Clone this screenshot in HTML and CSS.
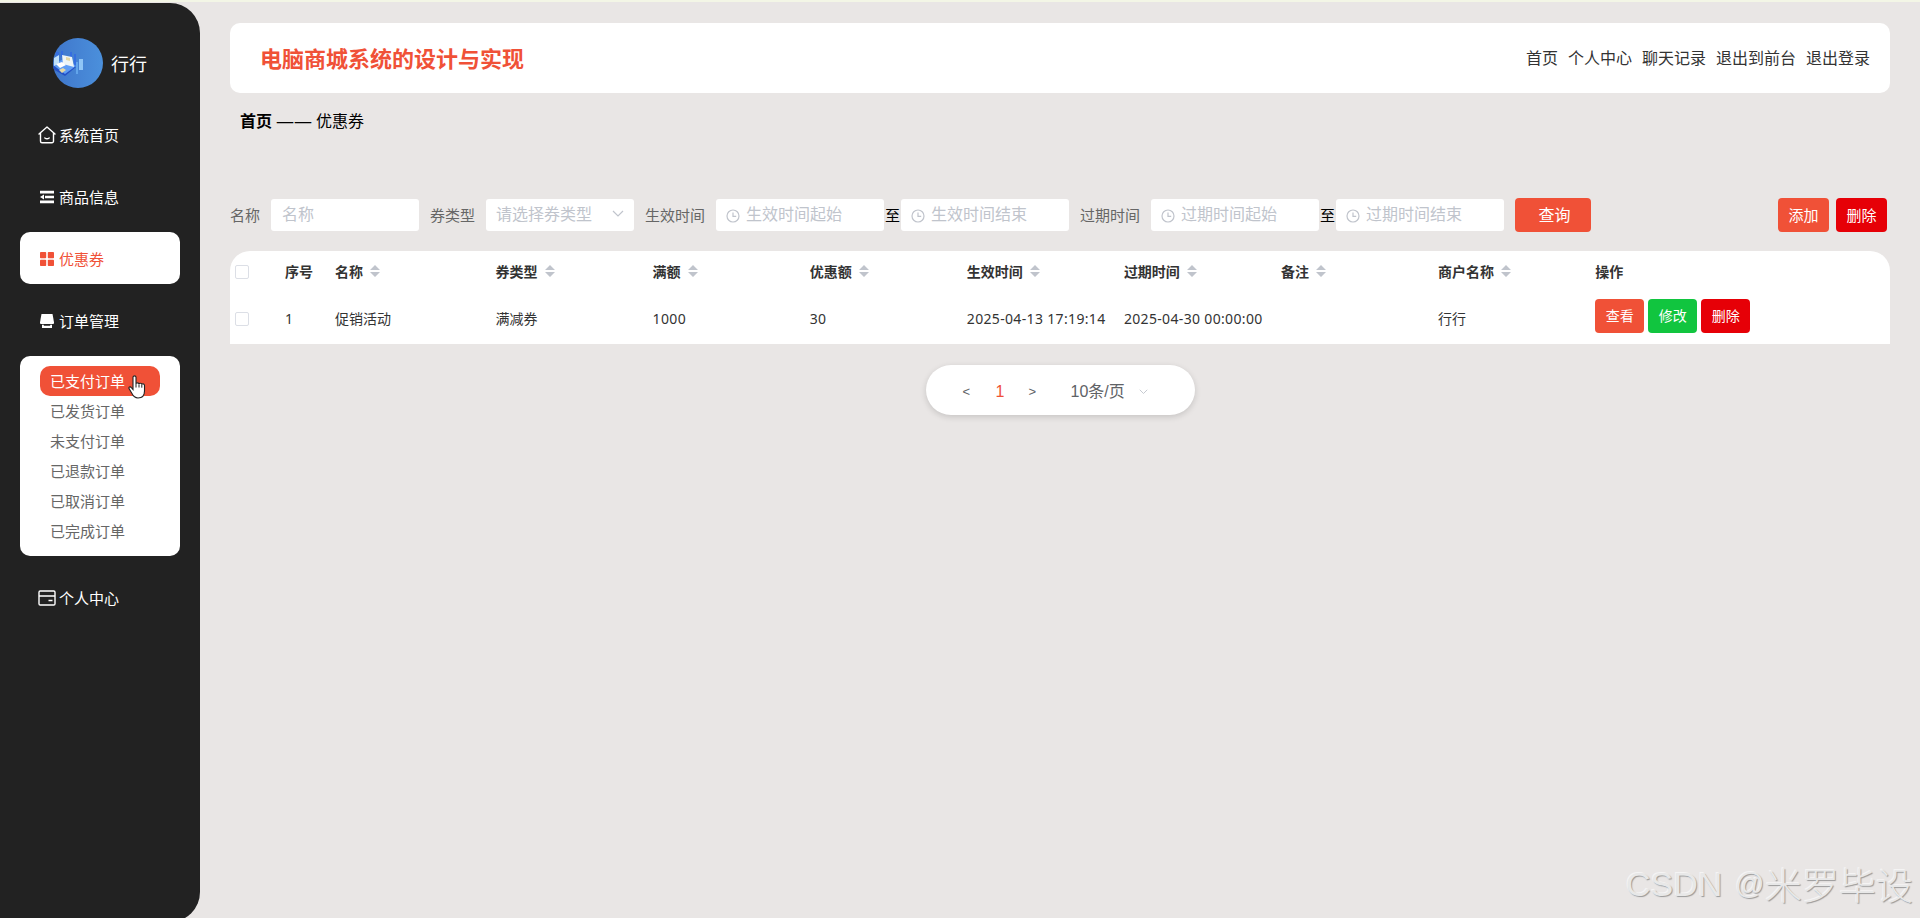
FILE: index.html
```html
<!DOCTYPE html>
<html lang="zh-CN">
<head>
<meta charset="utf-8">
<title>电脑商城系统的设计与实现</title>
<link rel="stylesheet" href="styles.css">
</head>
<body>
<svg class="defs" width="0" height="0">
  <symbol id="sort" viewBox="0 0 10 12"><path d="M5 0l5 5H0zM5 12L0 7h10z" fill="#c0c4cc"/></symbol>
  <symbol id="clock" viewBox="0 0 14 14"><circle cx="7" cy="7" r="6" fill="none" stroke="#c0c4cc" stroke-width="1.2"/><path d="M7 3.4v4h3.2" fill="none" stroke="#c0c4cc" stroke-width="1.2"/></symbol>
  <symbol id="chevron" viewBox="0 0 12 8"><path d="M1 1l5 5 5-5" fill="none" stroke="#c0c4cc" stroke-width="1.2"/></symbol>
</svg>
<div class="app">
  <aside class="sidebar">
    <div class="user">
      <svg class="avatar" viewBox="0 0 50 50">
        <defs>
          <clipPath id="round"><circle cx="25" cy="25" r="25"/></clipPath>
          <linearGradient id="sky" x1="0" x2="1"><stop offset="0" stop-color="#3f76cb"/><stop offset="1" stop-color="#4b90dc"/></linearGradient>
        </defs>
        <g clip-path="url(#round)">
          <path fill="url(#sky)" d="M0 0h50v50H0z"/>
          <path fill="#356ee0" d="M3 14h3v12H3zM8 13h2v6H8zM17 14h2v10h-2zM21 16h2v12h-2z"/>
          <path fill="#2450c4" d="M0 28l12-7 11 8-11 9L0 31z"/>
          <path fill="#5f9df4" d="M0 27l12-7 11 8-11 8z"/>
          <path fill="#bfe0fb" d="M1 20l5-3v8l-5 3z"/>
          <path fill="#edf5f7" d="M9 17l10 2 2 10-11-3z"/>
          <path fill="#fff" d="M3 26l6-2 4 3-6 3z"/>
          <path fill="#e6d9a4" d="M6 32l4-2 3 2-4 3zM13 19l4 1v3l-4-1z"/>
          <path fill="#8fc5f6" d="M26 21h4v11h-4z"/>
          <path fill="#62a5eb" d="M23 24h2v12h-2z"/>
        </g>
      </svg>
      <span class="user-name">行行</span>
    </div>
    <nav class="menu">
      <a class="menu-item">
        <svg class="icon icon-wide" viewBox="0 0 18 18" fill="none" stroke="#fff" stroke-width="1.4" stroke-linejoin="round" stroke-linecap="round"><path d="M1 8l8-7 8 7M2.5 7v8.2a1.5 1.5 0 0 0 1.5 1.5h10a1.5 1.5 0 0 0 1.5-1.5V7M6.8 12q2.2 1.6 4.4 0"/></svg>
        <span>系统首页</span></a>
      <a class="menu-item">
        <svg class="icon" viewBox="0 0 14 14" fill="#fff"><path d="M0 .8h14v2.6H0zM5 5.7h9v2.6H5zM0 10.6h14v2.6H0zM0 7l4-2.4v4.8z"/></svg>
        <span>商品信息</span></a>
      <a class="menu-item active">
        <svg class="icon" viewBox="0 0 14 14" fill="#f05137"><rect width="6.2" height="6.2" rx=".8"/><rect x="7.8" width="6.2" height="6.2" rx=".8"/><rect y="7.8" width="6.2" height="6.2" rx=".8"/><rect x="7.8" y="7.8" width="6.2" height="6.2" rx=".8"/></svg>
        <span>优惠券</span></a>
      <a class="menu-item">
        <svg class="icon" viewBox="0 0 14 14" fill="#fff"><path d="M1.5 0h11L14 8.2V9a1 1 0 0 1-1 1H1a1 1 0 0 1-1-1v-.8z"/><path d="M2 10.8h1.8v1h6.4v-1H12V14H2z"/></svg>
        <span>订单管理</span></a>
      <div class="submenu">
        <a class="sub-item current">已支付订单
          <svg class="pointer" viewBox="0 0 18 24"><path d="M5 2.2C5 .4 8 .4 8 2.2V9c0-1.600 3-1.500 3 .2 0-1.400 2.800-1.200 2.800.5 0-1.300 2.700-1.100 2.700.7V16c0 4-2 7-6.500 7-3.400 0-4.700-1.700-6.200-4.700L1 13.600c-.7-1.600 1.300-2.400 2.400-1L5 14.500z" fill="#fff" stroke="#222" stroke-width="1.1"/><path d="M8 9v3.500M11 9.500v3M13.800 10v2.700" stroke="#222" stroke-width="1"/></svg>
        </a>
        <a class="sub-item">已发货订单</a>
        <a class="sub-item">未支付订单</a>
        <a class="sub-item">已退款订单</a>
        <a class="sub-item">已取消订单</a>
        <a class="sub-item">已完成订单</a>
      </div>
      <a class="menu-item">
        <svg class="icon icon-wide" viewBox="0 0 18 18" fill="none" stroke="#fff" stroke-width="1.4"><rect x="1" y="2" width="16" height="14" rx="1.2"/><path d="M1 7h16M10.5 11.5h4"/></svg>
        <span>个人中心</span></a>
    </nav>
  </aside>

  <main class="main">
    <header class="header">
      <h1 class="title">电脑商城系统的设计与实现</h1>
      <nav class="links"><a>首页</a><a>个人中心</a><a>聊天记录</a><a>退出到前台</a><a>退出登录</a></nav>
    </header>
    <div class="crumbs"><b>首页</b><span class="dash">——</span><span>优惠券</span></div>

    <div class="filters">
      <span class="label">名称</span><div class="field name">名称</div>
      <span class="label">券类型</span><div class="field select">请选择券类型<svg class="arrow"><use href="#chevron"/></svg></div>
      <span class="label">生效时间</span><div class="field date"><svg class="clock"><use href="#clock"/></svg>生效时间起始</div><span class="to">至</span><div class="field date"><svg class="clock"><use href="#clock"/></svg>生效时间结束</div>
      <span class="label">过期时间</span><div class="field date"><svg class="clock"><use href="#clock"/></svg>过期时间起始</div><span class="to">至</span><div class="field date"><svg class="clock"><use href="#clock"/></svg>过期时间结束</div>
      <button class="btn search">查询</button>
      <div class="actions"><button class="btn">添加</button><button class="btn red">删除</button></div>
    </div>

    <section class="table">
      <div class="row head">
        <i class="check"></i><span>序号</span>
        <span>名称<svg class="sort"><use href="#sort"/></svg></span>
        <span>券类型<svg class="sort"><use href="#sort"/></svg></span>
        <span>满额<svg class="sort"><use href="#sort"/></svg></span>
        <span>优惠额<svg class="sort"><use href="#sort"/></svg></span>
        <span>生效时间<svg class="sort"><use href="#sort"/></svg></span>
        <span>过期时间<svg class="sort"><use href="#sort"/></svg></span>
        <span>备注<svg class="sort"><use href="#sort"/></svg></span>
        <span>商户名称<svg class="sort"><use href="#sort"/></svg></span>
        <span>操作</span>
      </div>
      <div class="row body">
        <i class="check"></i><span>1</span><span>促销活动</span><span>满减券</span><span class="num">1000</span><span class="num">30</span>
        <span class="num">2025-04-13 17:19:14</span><span class="num">2025-04-30 00:00:00</span><span></span><span>行行</span>
        <div class="ops"><button class="btn small">查看</button><button class="btn small green">修改</button><button class="btn small red">删除</button></div>
      </div>
    </section>

    <div class="pager">
      <span class="step">&lt;</span><span class="page">1</span><span class="step">&gt;</span>
      <span class="size">10条/页</span><svg class="size-arrow"><use href="#chevron"/></svg>
    </div>
  </main>
</div>
<div class="watermark"><span class="latin">CSDN</span><span class="at">@</span><span>米罗毕设</span></div>
</body>
</html>
```
FILE: styles.css
```css
* { box-sizing: border-box; }
html, body { height: 918px; overflow: hidden; }
body {
  margin: 0;
  background: #e9e6e5;
  border-top: 2px solid #f3f6e6;
  font-family: "Noto Sans", "Noto Sans CJK SC", sans-serif;
  color: #333;
}
.defs { display: block; }
.app { display: flex; padding-top: 1px; height: 922px; }

.sidebar {
  width: 200px;
  height: 919px;
  flex: none;
  background: #222;
  border-radius: 0 30px 30px 0;
  padding: 35px 20px 0;
}
.user { display: flex; align-items: center; gap: 8px; height: 50px; padding-left: 33px; }
.avatar { width: 50px; height: 50px; }
.user-name { color: #fff; font-size: 18px; line-height: 26px; padding-top: 1px; }
.menu { display: flex; flex-direction: column; gap: 10px; margin-top: 20px; }
.menu-item {
  display: flex;
  align-items: center;
  gap: 5px;
  height: 52px;
  padding: 2px 0 0 20px;
  border-radius: 10px;
  color: #fff;
  font-size: 15px;
  line-height: 22px;
}
.menu-item:last-child { padding-top: 0; }
.menu-item.active { background: #fff; color: #f05137; }
.icon { width: 14px; height: 14px; flex: none; }
.icon-wide { width: 18px; height: 18px; margin: 0 -2px; }
.submenu { background: #fff; border-radius: 10px; padding: 10px 20px; margin-bottom: 6px; }
.sub-item {
  display: block;
  position: relative;
  height: 30px;
  padding-left: 10px;
  border-radius: 10px;
  font-size: 15px;
  line-height: 30px;
  color: #666;
}
.sub-item.current { background: #f05137; color: #fff; }
.pointer { position: absolute; left: 88px; top: 9px; width: 18px; height: 24px; }

.main { flex: 1; padding: 20px 30px 0; }
.header {
  display: flex;
  align-items: center;
  justify-content: space-between;
  height: 70px;
  padding: 0 20px 0 30px;
  background: #fff;
  border-radius: 10px;
}
.title { margin: 0; font-size: 22px; line-height: 32px; color: #f05137; }
.links { display: flex; gap: 10px; font-size: 16px; line-height: 24px; }
.crumbs {
  display: flex;
  gap: 4px;
  height: 24px;
  margin: 16px 0 0 10px;
  font-size: 16px;
  line-height: 24px;
  color: #000;
}
.dash { width: 36px; font-size: 18px; }

.filters { display: flex; align-items: center; height: 34px; margin-top: 65px; }
.label { margin: 0 11px 0 11px; font-size: 15px; line-height: 22px; color: #666; }
.label:first-child { margin-left: 0; }
.field {
  display: flex;
  align-items: center;
  width: 148px;
  height: 32px;
  padding: 0 10px 2px 11px;
  background: #fff;
  border-radius: 3px;
  font-size: 16px;
  line-height: 24px;
  color: #c0c4cc;
  white-space: nowrap;
}
.select { padding-left: 10px; justify-content: space-between; }
.arrow { width: 12px; height: 8px; }
.date { width: 168px; padding-left: 10px; gap: 6px; }
.clock { width: 14px; height: 14px; margin-top: 3px; }
.to { width: 17px; padding-left: 1px; font-size: 15px; line-height: 22px; color: #000; }
.btn {
  width: 51px;
  height: 34px;
  padding: 0;
  border: 0;
  border-radius: 4px;
  background: #f05137;
  color: #fff;
  font: 15px/22px "Noto Sans", "Noto Sans CJK SC", sans-serif;
}
.btn.search { width: 76px; padding-left: 3px; margin-left: 11px; font-size: 16px; }
.btn.red { background: #e60007; }
.btn.green { background: #11c53f; }
.btn.small { width: 49px; font-size: 14px; }
.actions { display: flex; gap: 7px; margin: 0 3px 0 auto; }

.table { height: 93px; margin-top: 19px; background: #fff; border-radius: 20px 20px 0 0; font-size: 14px; }
.row {
  display: grid;
  grid-template-columns: 50px 50px 160.5px repeat(7, 157.1px) 1fr;
  align-items: center;
  padding-left: 5px;
  line-height: 20px;
  white-space: nowrap;
}
.head { height: 42px; font-weight: 700; }
.body { height: 51px; }
.check { width: 14px; height: 14px; border: 1px solid #dcdfe6; border-radius: 2px; }
.num { letter-spacing: .34px; }
.sort { width: 10px; height: 12px; margin-left: 7px; }
.ops { display: flex; gap: 4px; position: relative; top: -3px; }

.pager {
  display: flex;
  align-items: center;
  width: 269px;
  height: 50px;
  margin: 21px auto 0;
  padding: 3px 0 0 37px;
  border-radius: 25px;
  background: #fff;
  box-shadow: 0 2px 6px rgba(0, 0, 0, .15);
  font: 16px/24px "Liberation Sans", "Noto Sans CJK SC", sans-serif;
  color: #606266;
}
.step { width: 33px; font-size: 13px; }
.page { width: 33px; color: #f05137; }
.size { margin-left: 9px; }
.size-arrow { width: 9px; height: 6px; margin: 1px 0 0 14px; }

.watermark {
  position: absolute;
  left: 1626px;
  top: 857px;
  display: flex;
  font: 300 37px/54px "Noto Sans CJK SC", sans-serif;
  color: #e8e8e8;
  text-shadow: 1px 1px 1px #999, -1px -1px 0 #f5f4f4;
  white-space: nowrap;
}
.latin { width: 109px; font-family: "Liberation Sans", sans-serif; font-size: 34px; }
.at { width: 30px; font-family: "Liberation Sans", sans-serif; font-size: 29px; }
```
